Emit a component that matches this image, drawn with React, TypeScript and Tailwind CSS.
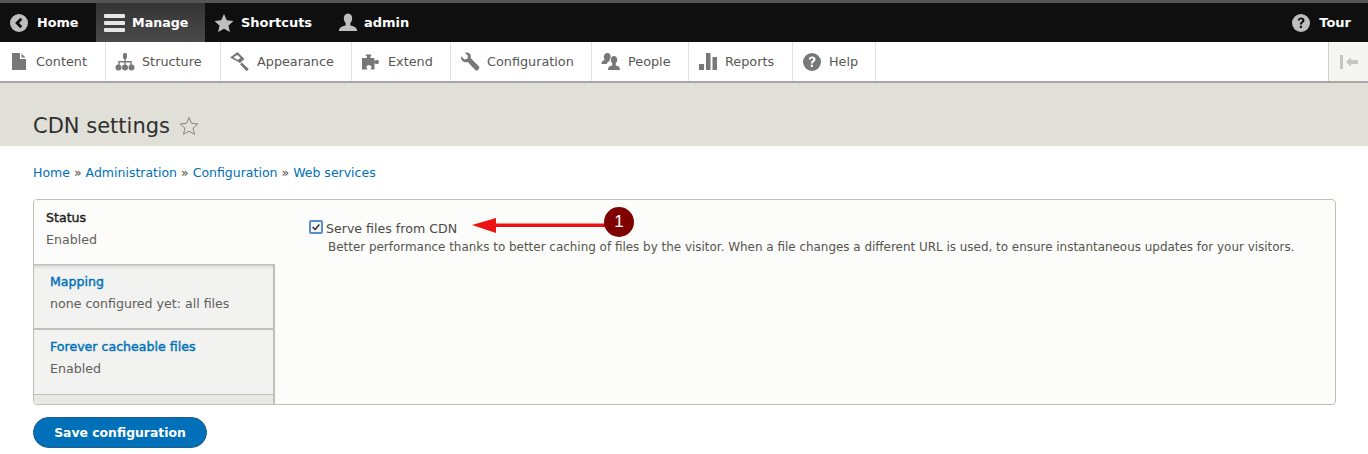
import React from "react"

const font = "font-['DejaVu_Sans',sans-serif]"
const tabTitle = "text-[12.6px] leading-[18px] [-webkit-text-stroke:0.4px_currentColor]"

function Ico({ children, className = "" }: { children: React.ReactNode; className?: string }) {
  return (
    <svg viewBox="0 0 20 20" className={"w-5 h-5 shrink-0 " + className} fill="currentColor">
      {children}
    </svg>
  )
}

const QuestionCircle = () => (
  <>
    <circle cx="10" cy="10" r="9" />
    <path d="M6.7 7.6C6.9 5.4 8.4 4.4 10.2 4.4c2 0 3.3 1.2 3.3 2.9 0 1.4-.9 2.1-1.7 2.7-.6.5-.9.8-.9 1.6H8.9c0-1.5.5-2.1 1.3-2.8.6-.5 1-.9 1-1.4 0-.7-.4-1.1-1.1-1.1-.8 0-1.2.5-1.3 1.3zM8.8 12.8h2.1V15H8.800z" fill="var(--hole)" />
  </>
)

const menuItems: { label: string; width: string; icon: React.ReactNode }[] = [
  {
    label: "Content",
    width: "w-[106px]",
    icon: <path d="M3 1h8v6h6v11H3zM12.5 1.500 16.5 5.500h-4z" />,
  },
  {
    label: "Structure",
    width: "w-[115px]",
    icon: (
      <>
        <rect x="8" y="1" width="4" height="6" rx="1.500" />
        <path d="M9.300 6h1.400v3h6v4h-1.400v-2.600h-4.600V13H9.300v-2.600H4.700V13H3.300V9h6z" />
        <circle cx="3.500" cy="15.500" r="3" />
        <circle cx="10" cy="15.500" r="3" />
        <circle cx="16.500" cy="15.500" r="3" />
      </>
    ),
  },
  {
    label: "Appearance",
    width: "w-[131px]",
    icon: <path d="M7.500 0l7 7-4.500 4-2.500-1.500L0 5.500zM7.300 3 3.500 5.300 7.700 8l2.800-2.200zM11.800 10.500l7 6.500-2.200 2.200-6.600-7z" fillRule="evenodd" />,
  },
  {
    label: "Extend",
    width: "w-[99px]",
    icon: <path d="M1 6h5V4.500C5 4 4.500 3 4.500 2.500h6c0 .5-.5 1.500-1 2V6h4v3c1-1 1.500-1 2.500-1 1.200 0 2 .9 2 2s-.8 2-2 2c-1 0-1.500 0-2.500-1v6.500H9.500c.5-1 1-1.500 1-2.500 0-1.200-1-1.800-2.500-1.800s-2.500.6-2.500 1.800c0 1 .5 1.500 1 2.500H1z" />,
  },
  {
    label: "Configuration",
    width: "w-[141px]",
    icon: <path d="M1.200 4.300 4.500 7.500l2.800-.7.700-2.800L4.800.8C7.300 0 10 .8 10.700 3.300c.3 1 .2 2-.1 2.800l8.200 8.200c.7.700.7 2 0 2.800l-.8.800c-.8.700-2 .7-2.800 0L7.800 9.900c-1 .4-2.100.5-3.200.2C1.800 9.300.4 6.800 1.200 4.300z" />,
  },
  {
    label: "People",
    width: "w-[97px]",
    icon: (
      <>
        <path d="M6.500 1c2 0 3.200 1.700 3.200 3.600 0 1.500-.5 2.400-1.200 3.100v1.500c-1.500.5-2.500 1.500-2.800 2.800H.500c0-2.500 1-3.300 3.200-4V7.700C3 7 2.800 6 2.800 4.600 2.800 2.700 4.500 1 6.500 1z" />
        <path d="M13 4c1.900 0 3.200 1.700 3.200 3.700 0 1.500-.6 2.800-1.400 3.500v2.300c2.600.6 4.200 1 4.200 4.500H7c0-3.500 1.600-3.900 4.200-4.500v-2.300c-.8-.7-1.400-2-1.400-3.500C9.800 5.700 11.100 4 13 4z" />
      </>
    ),
  },
  {
    label: "Reports",
    width: "w-[104px]",
    icon: (
      <>
        <rect x="1" y="12" width="5" height="6" />
        <rect x="8" y="1" width="4.500" height="17" />
        <rect x="14.500" y="5" width="4.500" height="13" />
      </>
    ),
  },
  {
    label: "Help",
    width: "w-[83px]",
    icon: <QuestionCircle />,
  },
]

export default function App() {
  return (
    <div className={"w-[1368px] h-[454px] overflow-hidden relative bg-white text-[12.6px] text-[#4a4a48] " + font}>
      <div className="h-[3px] bg-[#555553]" />
      <div className="h-[39px] bg-[#0f0f0f] flex items-stretch justify-between text-[13px] font-bold text-white [--hole:#0f0f0f]">
        <div className="flex items-stretch">
          <div className="w-[96px] flex items-center pl-[9px] gap-[8px]">
            <Ico className="text-[#bebebe]">
              <circle cx="10" cy="10" r="9" />
              <path d="M11.300 4.800l2 2L10.100 10l3.200 3.200-2 2L6.100 10z" fill="#0f0f0f" />
            </Ico>
            <span className="text-[12.8px]">Home</span>
          </div>
          <div className="w-[109px] flex items-center pl-[8px] gap-[6px] bg-gradient-to-b from-[#343434] to-[#4a4a4a]">
            <svg viewBox="0 0 22 20" className="w-[22px] h-[20px] shrink-0 text-[#e6e6e6]" fill="currentColor">
              <rect x="0" y="1" width="21" height="4" rx="1" />
              <rect x="0" y="8" width="21" height="4" rx="1" />
              <rect x="0" y="15" width="21" height="4" rx="1" />
            </svg>
            <span className="text-[12.7px]">Manage</span>
          </div>
          <div className="w-[125px] flex items-center pl-[9px] gap-[7px]">
            <Ico className="text-[#bebebe]">
              <path d="M10 1l2.800 6.200 6.700.7-5 4.500 1.400 6.600L10 15.700 4.100 19l1.400-6.600-5-4.500 6.700-.7z" />
            </Ico>
            <span>Shortcuts</span>
          </div>
          <div className="flex items-center pl-[8px] gap-[6px]">
            <Ico className="text-[#bebebe]">
              <path d="M10 .5c2.800 0 4.200 2.300 4.200 4.800 0 2-.8 3.700-1.800 4.700v2.500c3 .7 6.100 1.500 6.600 4.500v1H1v-1c.5-3 3.600-3.800 6.600-4.500V10c-1-1-1.800-2.700-1.800-4.700C5.800 2.800 7.200.5 10 .5z" />
            </Ico>
            <span>admin</span>
          </div>
        </div>
        <div className="flex items-center gap-[8px] pr-[17px]">
          <Ico className="text-[#bebebe]">
            <QuestionCircle />
          </Ico>
          <span>Tour</span>
        </div>
      </div>

      <div className="h-[41px] bg-white border-b-2 border-[#a6a6a2] flex items-stretch justify-between [--hole:#ffffff]">
        <div className="flex items-stretch">
          {menuItems.map((item) => (
            <div
              key={item.label}
              className={"flex items-center gap-[7px] pl-[9px] border-r border-[#e2e2de] text-[12.8px] text-[#565654] " + item.width}
            >
              <Ico className="text-[#787878]">{item.icon}</Ico>
              <span>{item.label}</span>
            </div>
          ))}
        </div>
        <div className="w-[40px] border-l border-[#d0d0cc] bg-[#f5f5f3] flex items-center justify-center">
          <svg viewBox="0 0 20 14" className="w-5 h-[14px] text-[#c4c4c2]" fill="currentColor">
            <rect x="1" y="0" width="3" height="14" />
            <path d="M7 7l5-4.500V5h7v4h-7v2.500z" />
          </svg>
        </div>
      </div>

      <div className="h-[63px] bg-[#e0e0d8] flex items-end pl-[33px] pb-[6px] gap-[9px]">
        <span className="text-[21px] leading-[28px] text-[#2f2f2d]">CDN settings</span>
        <svg viewBox="0 0 20 20" className="w-5 h-5 mb-[4px] text-[#8a857c]" fill="none" stroke="currentColor" strokeWidth="1">
          <path d="M10 1.500l2.500 5.800 6.300.6-4.700 4.200 1.400 6.200L10 15.100l-5.500 3.200 1.400-6.200-4.700-4.200 6.300-.6z" />
        </svg>
      </div>

      <div className="px-[33px]">
        <div className="h-[53px] pt-[2px] flex items-center gap-[4px] text-[12.5px]">
          <a className="text-[#0071b8]">Home</a>
          <span>»</span>
          <a className="text-[#0071b8]">Administration</a>
          <span>»</span>
          <a className="text-[#0071b8]">Configuration</a>
          <span>»</span>
          <a className="text-[#0071b8]">Web services</a>
        </div>

        <div className="h-[206px] w-[1303px] border border-[#bfbfba] rounded-[4px] bg-[#fcfcfa] flex overflow-hidden">
          <div className="w-[241px] shrink-0 flex flex-col bg-[#e8e8e4]">
            <div className="h-[65px] bg-[#fcfcfa] pl-[12px] pt-[9px] border-b border-[#c0c0bb]">
              <div className={"text-[#1f1f1d] " + tabTitle}>Status</div>
              <div className="mt-[4px] leading-[18px] text-[#5f5f5c]">Enabled</div>
            </div>
            <div className="h-[65px] bg-[#f2f2f0] pl-[16px] pt-[8px] border-b-[2px] border-r-[2px] border-[#c0c0bb] shadow-[inset_0_4px_4px_-4px_#a6a6a2]">
              <div className={"text-[#0071b8] " + tabTitle}>Mapping</div>
              <div className="mt-[4px] leading-[18px] text-[#5f5f5c]">none configured yet: all files</div>
            </div>
            <div className="h-[65px] bg-[#f2f2f0] pl-[16px] pt-[8px] border-b border-r-[2px] border-[#c0c0bb]">
              <div className={"text-[#0071b8] " + tabTitle}>Forever cacheable files</div>
              <div className="mt-[4px] leading-[18px] text-[#5f5f5c]">Enabled</div>
            </div>
            <div className="flex-1 border-r-[2px] border-[#c0c0bb]" />
          </div>
          <div className="flex-1 pl-[34px] pt-[20px]">
            <div className="flex items-center gap-[3px] h-[18px]">
              <span className="w-[14px] h-[14px] mb-[4px] border-2 border-[#5b8fca] rounded-[2px] bg-[#f5f5f5] flex items-center justify-center">
                <svg viewBox="0 0 12 12" className="w-[10px] h-[10px]" fill="none" stroke="#222" strokeWidth="1.6">
                  <path d="M2 6l3 3 5-6" />
                </svg>
              </span>
              <span className="text-[#4a4a48]">Serve files from CDN</span>
            </div>
            <p className="pl-[19px] text-[11.94px] leading-[18px] text-[#55554f] whitespace-nowrap">
              Better performance thanks to better caching of files by the visitor. When a file changes a different URL is used, to ensure instantaneous updates for your visitors.
            </p>
          </div>
        </div>

        <button className="block mt-[12px] w-[174px] h-[31px] pt-[2px] rounded-[16px] bg-[#0071b8] border border-[#1e5c90] text-white font-bold text-[12.4px]">
          Save configuration
        </button>
      </div>

      <svg viewBox="0 0 140 30" className="absolute left-[470px] top-[208px] w-[140px] h-[30px]">
        <path d="M2 17L26 10v5.500H136v3.500H26v6z" fill="#ee1111" />
      </svg>
      <div className="absolute left-[604px] top-[207px] w-[30px] h-[30px] rounded-full bg-[#7f0000] text-white flex items-center justify-center text-[17px] font-['Liberation_Sans',sans-serif]">
        1
      </div>
    </div>
  )
}
